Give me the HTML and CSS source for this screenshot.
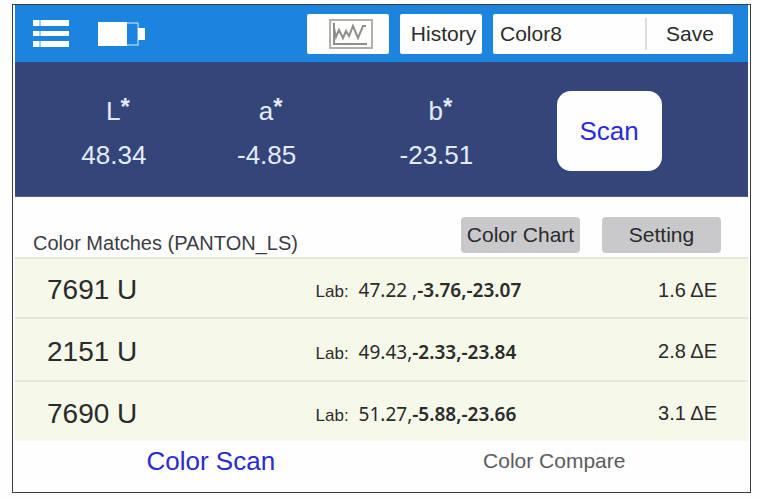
FILE: index.html
```html
<!DOCTYPE html>
<html lang="en">
  <head>
    <meta charset="UTF-8" />
    <meta name="viewport" content="width=device-width, initial-scale=1.0" />
    <title>Color Scan</title>
    <link rel="stylesheet" href="styles.css">
  </head>
  <body>
    <div class="app">
      <header class="topbar">
        <button type="button" class="icon-btn" aria-label="Menu">
          <svg width="36" height="30" viewBox="0 0 36 30" fill="#fff">
            <path d="M0 1h6v6H0zM8 1h28v6H8zM0 12h6v5H0zM8 12h28v5H8zM0 22h6v6H0zM8 22h28v6H8z" />
            <path d="M6 1h2v6H6zM6 12h2v5H6zM6 22h2v6H6z" opacity="0.6" />
          </svg>
        </button>
        <svg class="battery" width="47" height="24" viewBox="0 0 47 24" role="img" aria-label="Battery">
          <rect x="1" y="1" width="39" height="22" fill="none" stroke="#d4efff" stroke-width="1" />
          <rect x="0" y="0" width="29" height="24" fill="#fff" />
          <rect x="40" y="6" width="7" height="12" fill="#fff" />
        </svg>
        <div class="actions">
          <button type="button" class="btn-white chart-btn" aria-label="Graph">
            <svg width="44" height="30" viewBox="0 0 44 30" fill="none" stroke="#8f8f89">
              <rect x="1" y="1" width="42" height="28" stroke-width="2" stroke="#b0b0aa" />
              <path d="M5 4v21h33" stroke-width="2" />
              <path d="M5 9l2 9 3-7 4 8 3-7 3 5 4-10 5 12 5-12h3" stroke-width="2" />
            </svg>
          </button>
          <button type="button" class="btn-white history-btn">History</button>
          <form class="save-form">
            <input type="text" name="colorName" value="Color8" aria-label="Color name" />
            <button type="button">Save</button>
          </form>
        </div>
      </header>

      <section class="readings">
        <div class="reading">
          <span class="axis">L<sup>*</sup></span>
          <span>48.34</span>
        </div>
        <div class="reading">
          <span class="axis">a<sup>*</sup></span>
          <span>-4.85</span>
        </div>
        <div class="reading">
          <span class="axis">b<sup>*</sup></span>
          <span>-23.51</span>
        </div>
        <button type="button" class="scan-btn">Scan</button>
      </section>

      <div class="matches-head">
        <h2>Color Matches (PANTON_LS)</h2>
        <button type="button">Color Chart</button>
        <button type="button">Setting</button>
      </div>

      <table class="matches">
        <tbody>
          <tr>
            <th scope="row">7691 U</th>
            <td><span class="lab">Lab:</span>47.22 ,<b>-3.76,-23.07</b></td>
            <td class="delta">1.6 ΔE</td>
          </tr>
          <tr class="tall">
            <th scope="row">2151 U</th>
            <td><span class="lab">Lab:</span>49.43,<b>-2.33,-23.84</b></td>
            <td class="delta">2.8 ΔE</td>
          </tr>
          <tr>
            <th scope="row">7690 U</th>
            <td><span class="lab">Lab:</span>51.27,<b>-5.88,-23.66</b></td>
            <td class="delta">3.1 ΔE</td>
          </tr>
        </tbody>
      </table>

      <nav class="tabs">
        <a href="#scan" class="active">Color Scan</a>
        <a href="#compare">Color Compare</a>
      </nav>
    </div>
  </body>
</html>
```

FILE: styles.css
```css
* {
  box-sizing: border-box;
}

body {
  margin: 0;
  padding: 4px 10px 4px 12px;
  background-color: #fefefe;
  color: #2b2b2b;
  font-family: "Liberation Sans", Arial, sans-serif;
  font-size: 20px;
}

button,
input {
  font-family: inherit;
  font-size: 21px;
  color: inherit;
  border: none;
  padding: 0;
}
button {
  cursor: pointer;
}

.app {
  border: 1px solid #3c3c40;
  padding: 0 2px;
}

/* Top bar */
.topbar {
  display: flex;
  align-items: center;
  padding: 9px 15px 8px 18px;
  background-color: #1c84dc;
}
.icon-btn {
  display: flex;
  background: none;
}
.battery {
  margin-left: 29px;
}
.actions {
  display: flex;
  gap: 11px;
  margin-left: auto;
}
.btn-white {
  display: flex;
  align-items: center;
  justify-content: center;
  width: 82px;
  height: 40px;
  background-color: #fefefe;
  border-radius: 2px;
}
.chart-btn,
.history-btn {
  padding-left: 5px;
}
.save-form {
  display: flex;
  align-items: center;
  width: 240px;
  height: 40px;
  background-color: #fefefe;
  border-radius: 2px;
}
.save-form input {
  flex: 1;
  min-width: 0;
  height: 32px;
  padding-left: 7px;
  background: none;
  border-right: 2px solid #dcdcdc;
}
.save-form button {
  width: 86px;
  background: none;
}

/* L a b values */
.readings {
  display: grid;
  grid-template-columns: 148fr 158fr 182fr 164fr;
  align-items: center;
  justify-items: center;
  padding: 29px 57px 25px 25px;
  background-color: #344679;
  border-bottom: 1px solid #52659b;
  color: #e4ebff;
  font-size: 26px;
}
.reading {
  display: flex;
  flex-direction: column;
  align-items: center;
  gap: 16px;
  padding-top: 4px;
  line-height: 28px;
}
.axis {
  padding-left: 8px;
}
.axis sup {
  font-size: 24px;
  font-weight: bold;
  line-height: 0;
  vertical-align: 5px;
}
.scan-btn {
  width: 105px;
  height: 80px;
  background-color: #fefefe;
  border-radius: 14px;
  color: #2b2bdc;
  font-size: 26px;
}

/* Matches */
.matches-head {
  display: flex;
  align-items: center;
  gap: 22px;
  padding: 19px 27px 4px 18px;
}
.matches-head h2 {
  flex: 1;
  margin: 0;
  padding-top: 17px;
  color: #3c3c46;
  font-size: 20px;
  font-weight: normal;
  line-height: 20px;
}
.matches-head button {
  width: 119px;
  height: 36px;
  background-color: #c9c9cb;
  border-radius: 4px;
}
.matches {
  width: 100%;
  table-layout: fixed;
  border-collapse: collapse;
  background-color: #f6f8ea;
}
.matches th,
.matches td {
  height: 60px;
  padding: 4px 0 0;
  border-top: 2px solid #e4e6da;
  text-align: left;
}
.matches .tall th,
.matches .tall td {
  height: 63px;
}
.matches th {
  width: 41%;
  padding-left: 32px;
  font-size: 28px;
  font-weight: normal;
}
.matches td {
  font-family: "Noto Sans", "Open Sans", sans-serif;
  font-size: 19px;
}
.matches b {
  font-weight: 600;
}
.matches .lab {
  margin-right: 10px;
  font-family: "Liberation Sans", Arial, sans-serif;
  font-size: 17px;
}
.matches .delta {
  width: 20%;
  padding-right: 31px;
  font-family: "Liberation Sans", Arial, sans-serif;
  font-size: 20px;
  text-align: right;
}

/* Bottom tabs */
.tabs {
  display: grid;
  grid-template-columns: 391fr 295fr;
  align-items: center;
  justify-items: center;
  padding: 5px 46px 16px 0;
  line-height: 30px;
}
.tabs a {
  color: #5c5c60;
  font-size: 21px;
  text-decoration: none;
}
.tabs .active {
  color: #2b2bcf;
  font-size: 26px;
}
```
